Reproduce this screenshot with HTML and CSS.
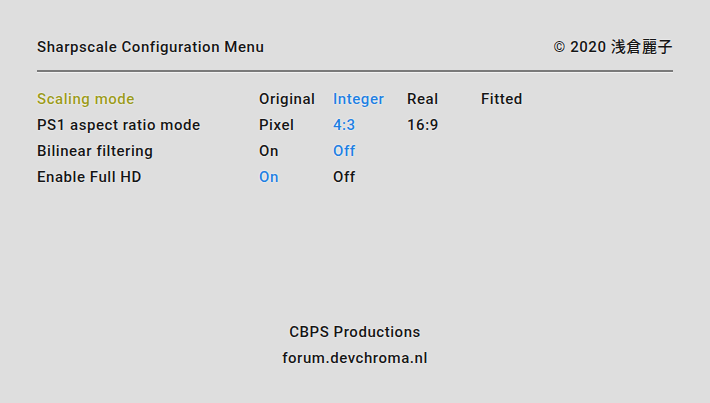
FILE: index.html
```html
<!DOCTYPE html>
<html lang="en">
<head>
    <meta charset="UTF-8">
    <title>Sharpscale Configuration Menu</title>
    <link rel="stylesheet" href="styles.css">
</head>
<body>
    <div class="screen">
        <div class="header">
            <span>Sharpscale Configuration Menu</span>
            <span>&copy; 2020 浅倉麗子</span>
        </div>
        <div class="rule"></div>

        <div class="menu">
            <div class="label active">Scaling mode</div>
            <div>Original</div>
            <div class="sel">Integer</div>
            <div>Real</div>
            <div>Fitted</div>

            <div class="label">PS1 aspect ratio mode</div>
            <div>Pixel</div>
            <div class="sel">4:3</div>
            <div>16:9</div>
            <div></div>

            <div class="label">Bilinear filtering</div>
            <div>On</div>
            <div class="sel">Off</div>
            <div></div>
            <div></div>

            <div class="label">Enable Full HD</div>
            <div class="sel">On</div>
            <div>Off</div>
            <div></div>
            <div></div>
        </div>

        <div class="footer">
            <div>CBPS Productions</div>
            <div>forum.devchroma.nl</div>
        </div>
    </div>
</body>
</html>
```

FILE: styles.css
```css
body {
    margin: 0;
    background-color: #dedede;
    font-family: "Roboto", "Noto Sans CJK JP", sans-serif;
    font-weight: 500;
    font-size: 15px;
    letter-spacing: 0.55px;
    color: #151515;
}
.screen {
    width: 710px;
    height: 403px;
    box-sizing: border-box;
    padding: 37px 37px 0;
    text-shadow: 0 0 2px #fff, 0 0 1px #fff;
}
.header {
    display: flex;
    justify-content: space-between;
    line-height: 20px;
}
.rule {
    margin-top: 13px;
    border-top: 2px solid #7a7a7a;
    border-bottom: 1px solid #f2f2f2;
}
.menu {
    margin-top: 13px;
    display: grid;
    grid-template-columns: 222px 74px 74px 74px 74px;
    line-height: 26px;
}
.label.active {
    color: #9a9a1c;
}
.sel {
    color: #1f7fe0;
}
.footer {
    margin-top: 129px;
    text-align: center;
    line-height: 26px;
}
```
